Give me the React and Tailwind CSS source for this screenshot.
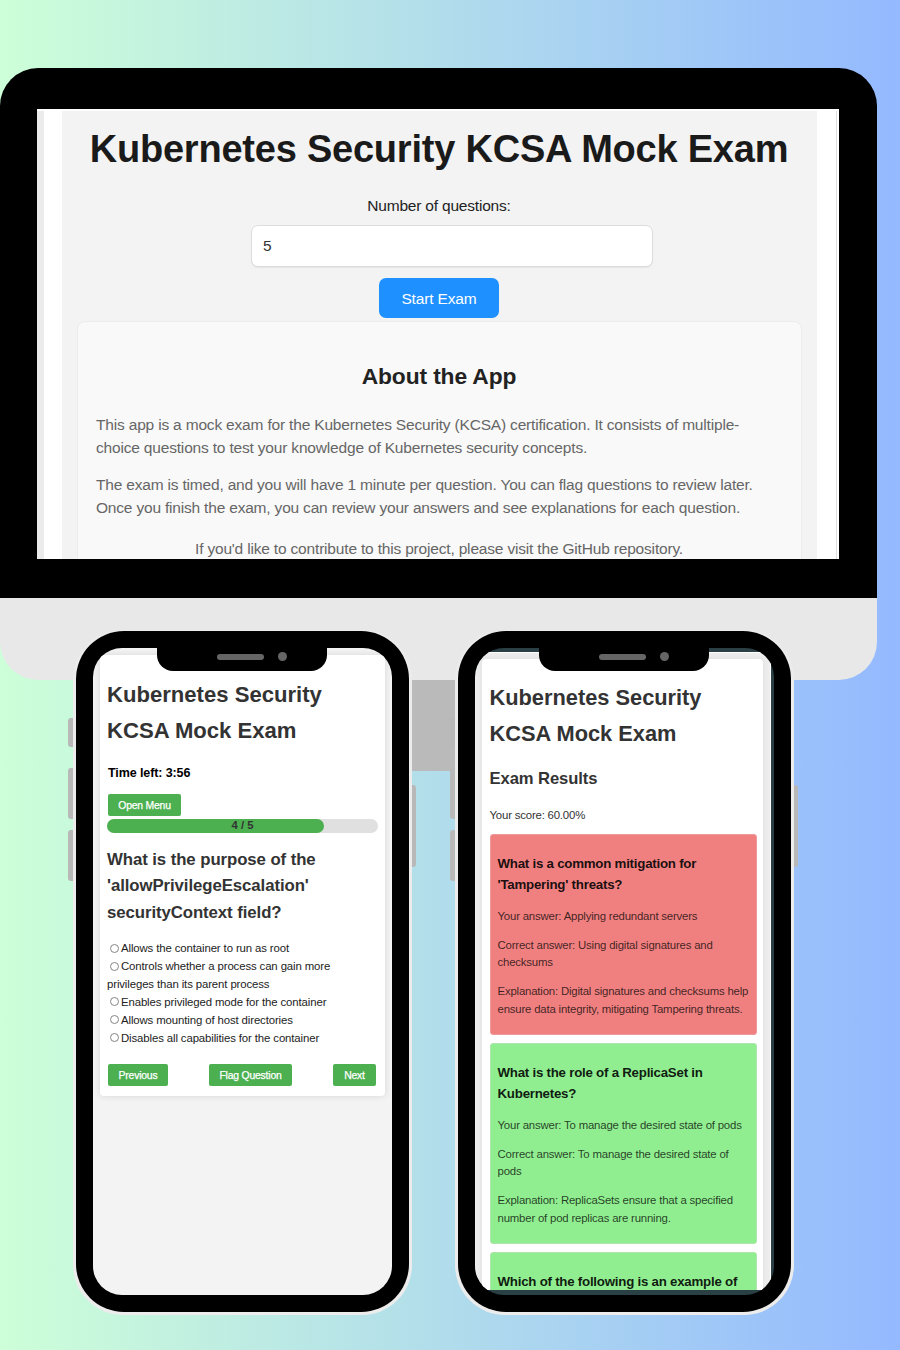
import React from 'react';

function SideButtons({ side }) {
  if (side === 'left') {
    return (
      <div className="flex w-[5px] flex-col items-end pt-[88px]">
        <span className="h-[29px] w-[5px] rounded-l-[3px] bg-[#b8b8b8]" />
        <span className="mt-[21px] h-[51px] w-[5px] rounded-l-[3px] bg-[#b8b8b8]" />
        <span className="mt-[11px] h-[51px] w-[5px] rounded-l-[3px] bg-[#b8b8b8]" />
      </div>
    );
  }
  return (
    <div className="flex w-[4px] flex-col pt-[155px]">
      <span className="h-[82px] w-[4px] rounded-r-[3px] bg-[#b8b8b8]" />
    </div>
  );
}

function Phone({ children, screen }) {
  return (
    <div className="flex">
      <SideButtons side="left" />
      <div className="h-[685px] w-[339px] rounded-[50px] bg-[#ececec] pt-px pr-[3px] pb-[3px] pl-[2.5px]">
        <div className="relative h-full rounded-[48px] bg-black pt-[17px] pr-[17.5px] pl-[17.5px]">
          <div className={`h-[647px] overflow-hidden rounded-[29px] ${screen}`}>{children}</div>
          <div className="absolute top-[16px] left-[81.5px] flex h-[24px] w-[170px] items-center rounded-b-[16px] bg-black pb-[5px] pl-[60px]">
            <span className="h-[6px] w-[47px] rounded-full bg-[#666666]" />
            <span className="ml-[14px] h-[9px] w-[9px] rounded-full bg-[#666666]" />
          </div>
        </div>
      </div>
      <SideButtons side="right" />
    </div>
  );
}

function Lines({ items }) {
  return items.map((t) => (
    <span key={t} className="block whitespace-nowrap">
      {t}
    </span>
  ));
}

function GreenButton({ children, width }) {
  return (
    <button className={`h-[22px] rounded-[2px] bg-[#4caf50] text-center text-[10.4px] leading-[23px] tracking-[-0.2px] whitespace-nowrap text-white [-webkit-text-stroke:0.25px_white] ${width}`}>
      {children}
    </button>
  );
}

function Monitor() {
  return (
    <div className="flex h-[530px] w-[877px] rounded-t-[38px] bg-black pt-[41px] pl-[37px]">
      <div className="flex h-[450px] w-[802px] overflow-hidden bg-white pt-[2px]">
        <div className="w-[7px] bg-[#ebebeb]" />
        <div className="ml-[18px] flex w-[755px] flex-col items-center bg-[#f3f3f3] px-[15px] pt-[14px]">
          <h1 className="mr-px text-[38px] leading-[48px] font-bold tracking-[-0.22px] whitespace-nowrap text-[#1a1a1a]">
            Kubernetes Security KCSA Mock Exam
          </h1>
          <label className="mt-[22px] mr-px text-[15.5px] leading-[22px] tracking-[-0.2px] text-[#222]">Number of questions:</label>
          <div className="mt-[8px] ml-[25px] h-[42px] w-[402px] shrink-0 rounded-[7px] border-[1.5px] border-[#dcdcdc] bg-white pl-[11px] text-[15.5px] leading-[39px] text-[#333] shadow-[0_1px_1px_rgba(0,0,0,0.06)]">
            5
          </div>
          <button className="mt-[11px] mr-[1px] h-[40px] w-[120px] shrink-0 rounded-[7px] bg-[#1e90ff] text-[15.5px] leading-[37px] tracking-[-0.15px] text-white">
            Start Exam
          </button>
          <section className="mt-[3px] h-[260px] w-[725px] shrink-0 rounded-t-[8px] border border-[#ececec] bg-[#f9f9f9] px-[18px] pt-[39px]">
            <h2 className="mr-px text-center text-[22.8px] leading-[30px] font-bold tracking-[-0.12px] text-[#222]">About the App</h2>
            <p className="mt-[23px] text-[15.5px] leading-[22.6px] tracking-[-0.18px] text-[#666]">
              <Lines
                items={[
                  'This app is a mock exam for the Kubernetes Security (KCSA) certification. It consists of multiple-',
                  'choice questions to test your knowledge of Kubernetes security concepts.',
                ]}
              />
            </p>
            <p className="mt-[15px] text-[15.5px] leading-[22.6px] tracking-[-0.19px] text-[#666]">
              <Lines
                items={[
                  'The exam is timed, and you will have 1 minute per question. You can flag questions to review later.',
                  'Once you finish the exam, you can review your answers and see explanations for each question.',
                ]}
              />
            </p>
            <p className="mt-[19px] mr-px text-center text-[15.5px] leading-[22.6px] tracking-[-0.18px] whitespace-nowrap text-[#666]">
              If you'd like to contribute to this project, please visit the GitHub repository.
            </p>
          </section>
        </div>
        <div className="ml-[19px] w-px bg-[#dedede]" />
      </div>
    </div>
  );
}

function Option({ children }) {
  return (
    <label className="block whitespace-nowrap">
      <span className="mr-[2px] ml-[3px] inline-block h-[9px] w-[9px] rounded-full border border-[#858585] bg-white align-[-0.3px]" />
      {children}
    </label>
  );
}

function QuestionScreen() {
  return (
    <div className="mt-[7px] ml-[7px] h-[441px] w-[285px] rounded-[4px] bg-white px-[7px] pt-[22px] shadow-[0_0_7px_rgba(0,0,0,0.12)]">
      <h1 className="text-[22.1px] leading-[36px] font-bold text-[#333]">
        <Lines items={['Kubernetes Security', 'KCSA Mock Exam']} />
      </h1>
      <p className="mt-[15px] ml-px text-[12.5px] leading-[18px] font-bold tracking-[-0.1px] text-black">Time left: 3:56</p>
      <div className="mt-[12px] ml-px flex">
        <GreenButton width="w-[73px]">Open Menu</GreenButton>
      </div>
      <div className="mt-[2.5px] h-[14px] w-[271px] rounded-full bg-[#e0e0e0]">
        <div className="h-full w-[217px] rounded-full bg-[#4caf50]">
          <div className="w-[271px] text-center text-[11.3px] leading-[13px] font-bold text-[#333]">4 / 5</div>
        </div>
      </div>
      <h2 className="mt-[14px] text-[16.8px] leading-[26.8px] font-bold tracking-[-0.08px] text-[#333]">
        <Lines items={['What is the purpose of the', "'allowPrivilegeEscalation'", 'securityContext field?']} />
      </h2>
      <div className="mt-[13.5px] text-[11.4px] leading-[17.85px] tracking-[-0.12px] text-[#222]">
        <Option>Allows the container to run as root</Option>
        <Option>Controls whether a process can gain more</Option>
        <span className="block">privileges than its parent process</span>
        <Option>Enables privileged mode for the container</Option>
        <Option>Allows mounting of host directories</Option>
        <Option>Disables all capabilities for the container</Option>
      </div>
      <div className="mt-[17px] ml-px flex w-[268px] justify-between">
        <GreenButton width="w-[60px]">Previous</GreenButton>
        <GreenButton width="w-[83px]">Flag Question</GreenButton>
        <GreenButton width="w-[43px]">Next</GreenButton>
      </div>
    </div>
  );
}

function ResultCard({ title, paragraphs, tone }) {
  return (
    <article className={`mb-[8px] h-[201px] rounded-[3px] border px-[7px] pt-[19px] ${tone}`}>
      <h3 className="mb-[12.5px] text-[13.3px] leading-[20.8px] font-bold tracking-[-0.24px] text-black/90">
        <Lines items={title} />
      </h3>
      {paragraphs.map((p) => (
        <p key={p[0]} className="mb-[10.7px] text-[11.4px] leading-[17.8px] tracking-[-0.19px] text-black/75">
          <Lines items={p} />
        </p>
      ))}
    </article>
  );
}

function ResultsScreen() {
  return (
    <div className="flex h-full flex-col pt-[4px] pr-[3px] pb-[5px]">
      <div className="min-h-0 flex-1 overflow-hidden border-t border-r border-white bg-[#eeeeee] pt-[6px] pl-[7px]">
        <div className="h-[700px] w-[281px] rounded-[4px] bg-white pt-[21px] pr-[6.5px] pl-[7.5px] shadow-[0_0_7px_rgba(0,0,0,0.08)]">
          <h1 className="text-[21.8px] leading-[36px] font-bold text-[#333]">
            <Lines items={['Kubernetes Security', 'KCSA Mock Exam']} />
          </h1>
          <h2 className="mt-[14px] text-[16.6px] leading-[26px] font-bold tracking-[-0.08px] text-[#333]">Exam Results</h2>
          <p className="mt-[13.5px] mb-[10.5px] text-[11.4px] leading-[18px] tracking-[-0.19px] text-[#333]">Your score: 60.00%</p>
          <ResultCard
            tone="bg-[#f08080] border-[#e99]"
            title={['What is a common mitigation for', "'Tampering' threats?"]}
            paragraphs={[
              ['Your answer: Applying redundant servers'],
              ['Correct answer: Using digital signatures and', 'checksums'],
              ['Explanation: Digital signatures and checksums help', 'ensure data integrity, mitigating Tampering threats.'],
            ]}
          />
          <ResultCard
            tone="bg-[#90ee90] border-[#aee4ae]"
            title={['What is the role of a ReplicaSet in', 'Kubernetes?']}
            paragraphs={[
              ['Your answer: To manage the desired state of pods'],
              ['Correct answer: To manage the desired state of', 'pods'],
              ['Explanation: ReplicaSets ensure that a specified', 'number of pod replicas are running.'],
            ]}
          />
          <ResultCard tone="bg-[#90ee90] border-[#aee4ae]" title={['Which of the following is an example of']} paragraphs={[]} />
        </div>
      </div>
    </div>
  );
}

export default function App() {
  return (
    <main className="h-[1350px] w-[900px] overflow-hidden bg-[linear-gradient(90deg,#cdffd8,#94b9ff)] pt-[68px] font-['Liberation_Sans',Arial,sans-serif]">
      <Monitor />
      <div className="h-[82px] w-[877px] rounded-b-[38px] bg-[#e8e8e8]" />
      <div className="ml-[300px] h-[91px] w-[277px] bg-[#bababa]" />
      <div className="relative -mt-[141px] ml-[68px] flex gap-[34px]">
        <Phone screen="bg-[#f3f3f3]">
          <QuestionScreen />
        </Phone>
        <Phone screen="bg-[#2a4045]">
          <ResultsScreen />
        </Phone>
      </div>
    </main>
  );
}
